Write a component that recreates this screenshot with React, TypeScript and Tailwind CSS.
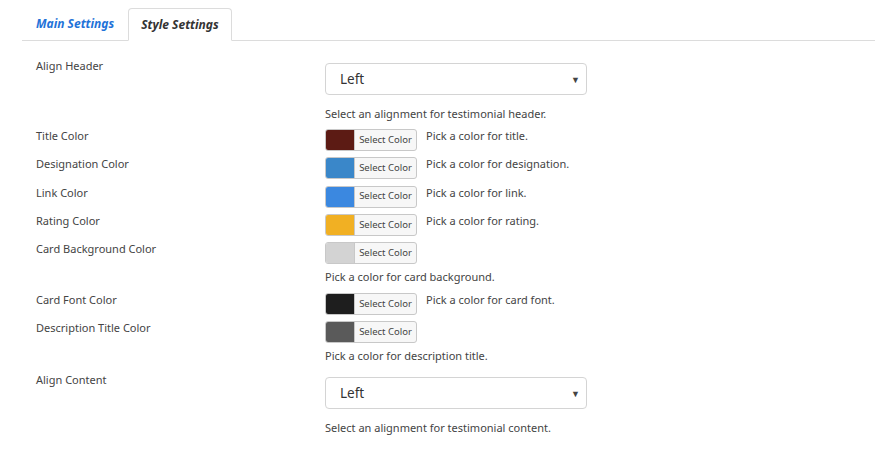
import React from 'react';

type ColorRow = {
  label: string;
  color: string;
  help: string;
  helpBelow?: boolean;
  spacing?: string;
};

const colorRows: ColorRow[] = [
  { label: 'Title Color', color: '#5c1b14', help: 'Pick a color for title.' },
  { label: 'Designation Color', color: '#3a87c9', help: 'Pick a color for designation.' },
  { label: 'Link Color', color: '#3b88e0', help: 'Pick a color for link.' },
  { label: 'Rating Color', color: '#f1b023', help: 'Pick a color for rating.' },
  { label: 'Card Background Color', color: '#d3d3d3', help: 'Pick a color for card background.', helpBelow: true, spacing: 'mb-[6px]' },
  { label: 'Card Font Color', color: '#1e1e1e', help: 'Pick a color for card font.' },
  { label: 'Description Title Color', color: '#5a5a5a', help: 'Pick a color for description title.', helpBelow: true, spacing: 'mb-[7px]' },
];

function SelectRow({ label, help }: { label: string; help: string }) {
  return (
    <div className="flex">
      <div className="w-[303px] shrink-0 pl-[14px] pt-[1px] text-[11px] leading-[16px] text-[#444]">{label}</div>
      <div className="pt-[6px]">
        <div className="relative flex h-[32px] w-[262px] items-center rounded-[4px] border border-[#d4d4d4] bg-white pl-[14px] text-[13.5px] text-[#333]">
          Left
          <span className="absolute right-[6px] top-[9px] text-[9px] text-[#444]">▼</span>
        </div>
        <div className="mt-[11px] text-[11px] leading-[16px] text-[#444]">{help}</div>
      </div>
    </div>
  );
}

function ColorButton({ color }: { color: string }) {
  return (
    <div className="flex h-[22px] w-[92px] shrink-0 overflow-hidden rounded-[3px] border border-[#c8c8c8] bg-[#f7f7f7]">
      <div className="w-[28px] shrink-0" style={{ backgroundColor: color }} />
      <div className="flex flex-1 items-center justify-center border-l border-[#c8c8c8] text-[9.5px] text-[#444]">
        Select Color
      </div>
    </div>
  );
}

export default function App() {
  return (
    <div className="min-h-[451px] bg-white pl-[22px] pr-[11px] font-['Noto_Sans',sans-serif]">
      {/* Tabs */}
      <div className="flex h-[41px] items-end border-b border-[#dcdcdc] pt-[9px]">
        <div className="flex h-[32px] items-center px-[14px] text-[12px] font-bold italic text-[#1f73d8]">
          Main Settings
        </div>
        <div className="-mb-px flex h-[33px] items-center rounded-t-[4px] border border-b-white border-[#dcdcdc] bg-white px-[12px] text-[12px] font-bold italic text-[#333]">
          Style Settings
        </div>
      </div>

      <div className="pt-[16px]">
        <SelectRow label="Align Header" help="Select an alignment for testimonial header." />

        <div className="mt-[5px]">
          {colorRows.map((row) => (
            <div key={row.label} className={`flex ${row.helpBelow ? row.spacing : 'h-[28.25px]'}`}>
              <div className="w-[303px] shrink-0 pl-[14px] pt-[1px] text-[11px] leading-[16px] text-[#444]">{row.label}</div>
              <div className="pt-[2px]">
                <div className="flex">
                  <ColorButton color={row.color} />
                  {!row.helpBelow && (
                    <span className="-mt-[1px] ml-[9px] text-[11px] leading-[16px] text-[#444]">{row.help}</span>
                  )}
                </div>
                {row.helpBelow && (
                  <div className="mt-[5px] text-[11px] leading-[16px] text-[#444]">{row.help}</div>
                )}
              </div>
            </div>
          ))}
        </div>

        <SelectRow label="Align Content" help="Select an alignment for testimonial content." />
      </div>
    </div>
  );
}
